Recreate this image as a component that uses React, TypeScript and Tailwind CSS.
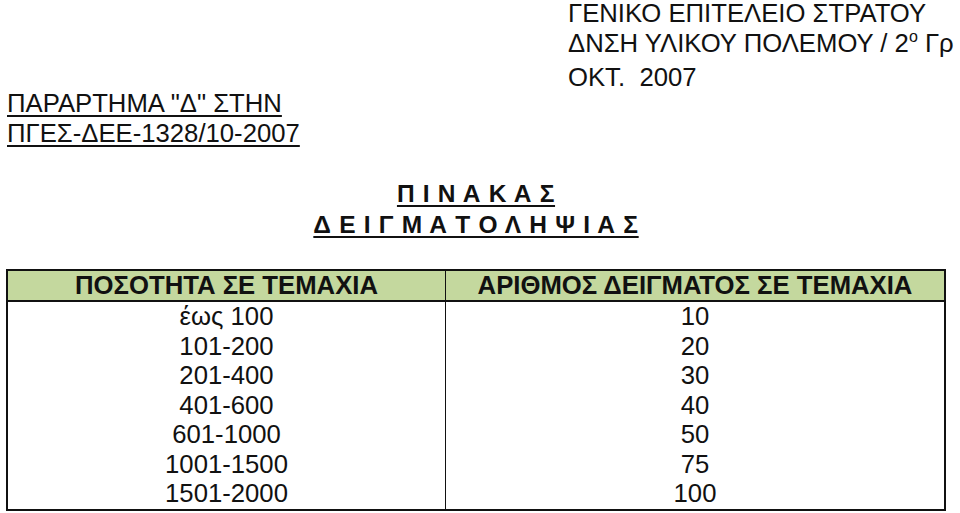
import React from "react";

const rows: [string, string][] = [
  ["έως 100", "10"],
  ["101-200", "20"],
  ["201-400", "30"],
  ["401-600", "40"],
  ["601-1000", "50"],
  ["1001-1500", "75"],
  ["1501-2000", "100"],
];

export default function App() {
  return (
    <div className="w-[960px] h-[513px] overflow-hidden bg-white text-[#111] font-['Liberation_Sans',Arial,sans-serif]">
      <div className="flex">
        <div className="w-[568px] shrink-0 pl-[7px] pt-[88px] text-[25.7px] leading-[30px]">
          <div><span className="underline decoration-2 underline-offset-[3px]">ΠΑΡΑΡΤΗΜΑ "Δ" ΣΤΗΝ</span></div>
          <div><span className="underline decoration-2 underline-offset-[3px]">ΠΓΕΣ-ΔΕΕ-1328/10-2007</span></div>
        </div>
        <div className="-mt-[2px] min-w-0 flex-1 overflow-hidden whitespace-pre text-[25.7px] leading-[30px]">
          <div>ΓΕΝΙΚΟ ΕΠΙΤΕΛΕΙΟ ΣΤΡΑΤΟΥ</div>
          <div>
            ΔΝΣΗ ΥΛΙΚΟΥ ΠΟΛΕΜΟΥ / 2<span className="relative -top-[10px] text-[16px]">ο</span> Γρ
          </div>
          <div>ΟΚΤ.  2007</div>
        </div>
      </div>

      <div className="ml-[6px] mt-[30px] w-[940px] text-center text-[24.5px] font-bold leading-[31px] tracking-[0.7px]">
        <div><span className="underline decoration-2 underline-offset-[3px]">Π Ι Ν Α Κ Α Σ</span></div>
        <div><span className="underline decoration-2 underline-offset-[3px]">Δ Ε Ι Γ Μ Α Τ Ο Λ Η Ψ Ι Α Σ</span></div>
      </div>

      <div className="ml-[6px] mt-[29px] w-[940px] border-2 border-[#111]">
        <div className="grid grid-cols-[438px_498px] border-b-2 border-[#111] bg-[#c4d89e] text-center text-[25.7px] font-bold leading-[29px]">
          <div className="border-r border-[#111]">ΠΟΣΟΤΗΤΑ ΣΕ ΤΕΜΑΧΙΑ</div>
          <div>ΑΡΙΘΜΟΣ ΔΕΙΓΜΑΤΟΣ ΣΕ ΤΕΜΑΧΙΑ</div>
        </div>
        <div className="grid grid-cols-[438px_498px] text-center text-[25.7px] leading-[29.5px]">
          <div className="border-r border-[#111]">
            {rows.map((r) => (
              <div key={r[0]}>{r[0]}</div>
            ))}
          </div>
          <div>
            {rows.map((r) => (
              <div key={r[0]}>{r[1]}</div>
            ))}
          </div>
        </div>
      </div>
    </div>
  );
}
